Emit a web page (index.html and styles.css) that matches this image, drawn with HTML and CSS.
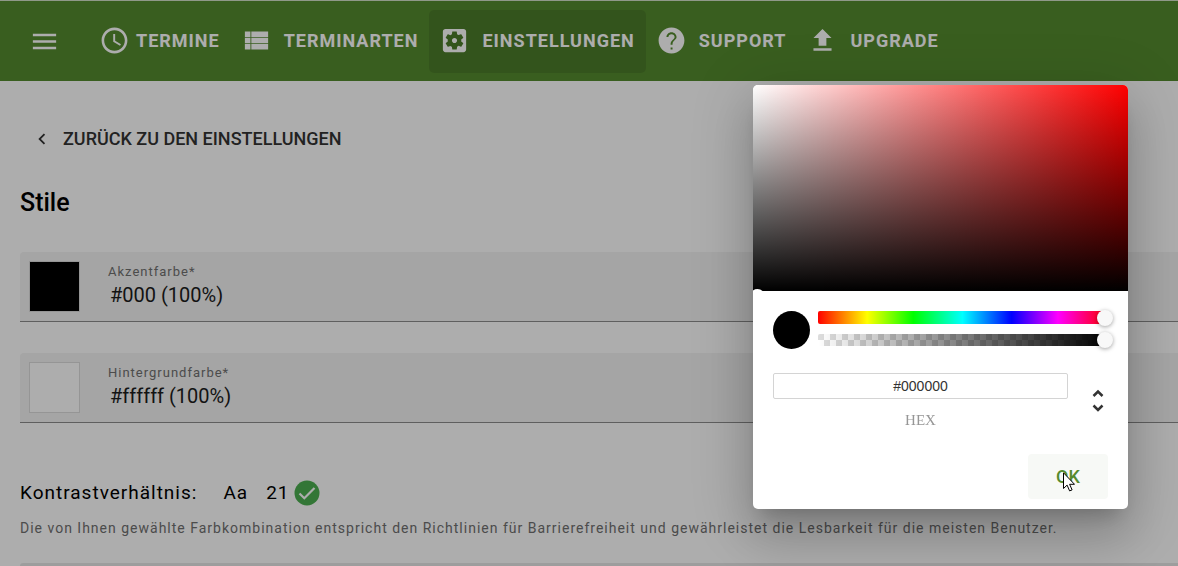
FILE: index.html
```html
<!DOCTYPE html>
<html lang="de">
<head>
    <meta charset="UTF-8">
    <meta name="viewport" content="width=device-width, initial-scale=1.0">
    <title>Einstellungen - Stile</title>
    <link rel="stylesheet" href="styles.css">
</head>
<body>

    <header class="topbar">
        <button class="menu-button" type="button" aria-label="Menü">
            <svg class="icon" viewBox="0 0 24 24"><path d="M3 18h18v-2H3v2zm0-5h18v-2H3v2zm0-7v2h18V6H3z"/></svg>
        </button>
        <nav class="nav">
            <a class="nav-item nav-item-first" href="#">
                <svg class="icon" viewBox="0 0 24 24"><path d="M11.99 2C6.47 2 2 6.48 2 12s4.47 10 9.99 10C17.52 22 22 17.52 22 12S17.52 2 11.99 2zM12 20c-4.42 0-8-3.58-8-8s3.58-8 8-8 8 3.58 8 8-3.58 8-8 8zm.5-13H11v6l5.25 3.15.75-1.23-4.5-2.67z"/></svg>
                Termine
            </a>
            <a class="nav-item" href="#">
                <svg class="icon" viewBox="0 0 24 24"><path d="M3 9.300h4.300V5H3v4.300zm0 4.800h4.300V9.900H3v4.200zm0 4.900h4.300v-4.300H3V19zM8 19h13v-4.300H8V19zm0-4.900h13V9.900H8v4.200zM8 5v4.300h13V5H8z"/></svg>
                Terminarten
            </a>
            <a class="nav-item active" href="#">
                <svg class="icon" viewBox="0 0 24 24"><path d="M12 10c-1.100 0-2 .9-2 2s.9 2 2 2 2-.9 2-2-.9-2-2-2zm7-7H5c-1.110 0-2 .9-2 2v14c0 1.100.89 2 2 2h14c1.110 0 2-.9 2-2V5c0-1.100-.89-2-2-2zm-1.750 9c0 .23-.02.46-.05.68l1.480 1.160c.13.11.17.3.08.45l-1.400 2.420c-.09.15-.27.21-.43.15l-1.740-.7c-.36.28-.76.51-1.180.69l-.26 1.850c-.03.17-.18.3-.35.3h-2.800c-.17 0-.32-.13-.35-.29l-.26-1.850c-.43-.18-.82-.41-1.180-.69l-1.740.7c-.16.06-.34 0-.43-.15l-1.400-2.420c-.09-.15-.05-.34.08-.45l1.480-1.160c-.03-.23-.05-.46-.05-.69s.02-.46.05-.68l-1.480-1.160c-.13-.11-.17-.3-.08-.45l1.400-2.420c.09-.15.27-.21.43-.15l1.740.7c.36-.28.76-.51 1.180-.69l.26-1.850c.03-.17.18-.3.35-.3h2.800c.17 0 .32.13.35.29l.26 1.850c.43.18.82.41 1.180.69l1.740-.7c.16-.06.34 0 .43.15l1.400 2.420c.09.15.05.34-.08.45l-1.480 1.160c.03.23.05.46.05.69z"/></svg>
                Einstellungen
            </a>
            <a class="nav-item" href="#">
                <svg class="icon" viewBox="0 0 24 24"><path d="M12 2C6.480 2 2 6.480 2 12s4.480 10 10 10 10-4.480 10-10S17.520 2 12 2zm.8 17h-1.500v-1.600h1.500V19zm2.100-7.700l-.9.900c-.8.800-1.200 1.500-1.200 3h-1.500v-.4c0-1.100.5-2.100 1.200-2.800l1.300-1.300c.4-.4.600-.9.600-1.400 0-1.200-1-2.100-2.400-2.100s-2.400.9-2.400 2.100H8.100C8.100 7.300 9.800 5.600 12 5.600s3.900 1.700 3.900 3.700c0 .8-.4 1.500-1 2z"/></svg>
                Support
            </a>
            <a class="nav-item" href="#">
                <svg class="icon" viewBox="0 0 24 24"><path d="M9 16h6v-6h4l-7-7-7 7h4v6zm-4 2h14v2H5v-2z"/></svg>
                Upgrade
            </a>
        </nav>
    </header>

    <main class="content">
        <a class="back-link" href="#">
            <svg viewBox="0 0 24 24"><path d="M15.410 7.410L14 6l-6 6 6 6 1.410-1.410L10.830 12z"/></svg>
            ZURÜCK ZU DEN EINSTELLUNGEN
        </a>

        <h1>Stile</h1>

        <div class="color-field">
            <button class="swatch swatch-black" type="button" aria-label="Akzentfarbe wählen"></button>
            <div class="field-text">
                <label for="accentColor">Akzentfarbe*</label>
                <input id="accentColor" type="text" value="#000 (100%)">
            </div>
        </div>

        <div class="color-field">
            <button class="swatch swatch-white" type="button" aria-label="Hintergrundfarbe wählen"></button>
            <div class="field-text">
                <label for="backgroundColor">Hintergrundfarbe*</label>
                <input id="backgroundColor" type="text" value="#ffffff (100%)">
            </div>
        </div>

        <div class="contrast">
            <span>Kontrastverhältnis:</span>
            <span class="sample">Aa</span>
            <span class="ratio">21</span>
            <svg class="check" viewBox="0 0 26 26"><circle cx="13" cy="13" r="12.500" fill="#4caf50"/><path d="M5.500 13.500l4.800 4.700L20.500 8" fill="none" stroke="#fff" stroke-width="2.200"/></svg>
        </div>
        <p class="note">Die von Ihnen gewählte Farbkombination entspricht den Richtlinien für Barrierefreiheit und gewährleistet die Lesbarkeit für die meisten Benutzer.</p>

        <div class="next-section"></div>
    </main>

    <div class="backdrop"></div>

    <div class="color-picker" role="dialog" aria-label="Farbauswahl">
        <div class="saturation">
            <span class="saturation-cursor"></span>
        </div>
        <div class="picker-body">
            <div class="slider-row">
                <span class="preview"></span>
                <div class="sliders">
                    <input class="slider hue" type="range" min="0" max="360" value="360" aria-label="Farbton">
                    <input class="slider alpha" type="range" min="0" max="100" value="100" aria-label="Deckkraft">
                </div>
            </div>
            <div class="hex-row">
                <div class="hex-field">
                    <input id="hexValue" type="text" value="#000000">
                    <label for="hexValue">HEX</label>
                </div>
                <button class="format-button" type="button" aria-label="Format wechseln">
                    <svg viewBox="0 0 12 24"><path d="M1.500 7L6 2.500 10.500 7M1.500 16.500L6 21 10.500 16.500"/></svg>
                </button>
            </div>
            <div class="actions">
                <button class="ok-button" type="button">OK</button>
                <svg class="pointer" viewBox="0 0 12 20"><path d="M.5.800v15.700l3.600-3.400 2.500 5.800 2.500-1-2.500-5.600h4.900z" fill="#fff" stroke="#000"/></svg>
            </div>
        </div>
    </div>

</body>
</html>
```

FILE: styles.css
```css
* {
    box-sizing: border-box;
}
body {
    font-family: Roboto, Arial, sans-serif;
    margin: 0;
    background-color: #fff;
    color: #000;
}
button {
    padding: 0;
    border: none;
    background: none;
    font-family: inherit;
    cursor: pointer;
}

/* top bar */
.topbar {
    display: flex;
    align-items: center;
    gap: 29px;
    padding: 9px 29px 8px;
    border-top: 1px solid #d5e2cb;
    background-color: #558b2f;
    color: white;
}
.icon {
    display: block;
    flex: none;
    width: 31px;
    height: 31px;
    fill: currentColor;
}
.menu-button {
    color: white;
}
.nav {
    display: flex;
}
.nav-item {
    display: flex;
    align-items: center;
    gap: 12px;
    height: 63px;
    padding: 0 11px 2px 10px;
    border-radius: 5px;
    color: white;
    font-size: 18px;
    font-weight: 700;
    letter-spacing: 1px;
    text-decoration: none;
    text-transform: uppercase;
}
.nav-item-first {
    gap: 6px;
}
.nav-item.active {
    background-color: rgba(0, 0, 0, 0.1);
}

/* page */
.content {
    padding: 44px 0 0 20px;
}
.back-link {
    display: flex;
    align-items: center;
    gap: 10px;
    padding-left: 11px;
    color: #333;
    font-size: 18px;
    font-weight: 500;
    line-height: 28px;
    text-decoration: none;
}
.back-link svg {
    width: 22px;
    height: 22px;
    fill: currentColor;
}
h1 {
    margin: 33px 0;
    font-size: 25px;
    font-weight: 500;
    line-height: 33px;
}
.color-field {
    display: flex;
    align-items: center;
    gap: 28px;
    height: 70px;
    margin-bottom: 31px;
    padding-left: 9px;
    border-bottom: 1px solid #8c8c8c;
    border-radius: 4px 0 0 0;
    background-color: #f3f3f3;
}
.swatch {
    width: 51px;
    height: 51px;
    border: 1px solid #dcdcdc;
}
.swatch-black {
    background-color: #000;
}
.swatch-white {
    background-color: #fff;
}
.field-text {
    display: flex;
    flex: 1;
    flex-direction: column;
    padding-bottom: 4px;
}
.field-text label {
    color: #707070;
    font-size: 13px;
    letter-spacing: 1px;
    line-height: 20px;
}
.field-text input {
    width: 100%;
    padding: 0 2px;
    border: none;
    outline: none;
    background: none;
    color: #1c1c1c;
    font-family: inherit;
    font-size: 20px;
    line-height: 26px;
}
.contrast {
    display: flex;
    align-items: center;
    padding-top: 26px;
    font-size: 19px;
    letter-spacing: 1px;
    line-height: 26px;
}
.sample {
    margin-left: 26px;
}
.ratio {
    margin-left: 18px;
}
.check {
    width: 26px;
    height: 26px;
    margin-left: 4px;
}
.note {
    margin: 11px 0 24px;
    color: #707070;
    font-size: 14px;
    letter-spacing: 1px;
    line-height: 22px;
}
.next-section {
    height: 3px;
    border-radius: 4px 0 0 0;
    background-color: #e8e8e8;
}
.backdrop {
    position: fixed;
    inset: 0;
    background-color: rgba(0, 0, 0, 0.32);
}

/* colour picker */
.color-picker {
    position: absolute;
    top: 85px;
    right: 50px;
    width: 375px;
    border-radius: 5px;
    background-color: white;
    box-shadow: 0 14px 19px -9px rgba(0, 0, 0, 0.2), 0 30px 48px 4px rgba(0, 0, 0, 0.14), 0 11px 58px 10px rgba(0, 0, 0, 0.12);
}
.saturation {
    position: relative;
    height: 206px;
    overflow: hidden;
    border-radius: 5px 5px 0 0;
    background: linear-gradient(to top, #000, transparent), linear-gradient(to right, #fff, #f00);
}
.saturation-cursor {
    position: absolute;
    bottom: -13px;
    left: -3px;
    width: 15px;
    height: 15px;
    border: 2px solid white;
    border-radius: 50%;
}
.picker-body {
    padding: 20px 20px 10px;
}
.slider-row {
    display: flex;
    gap: 8px;
    margin-right: -5px;
}
.preview {
    flex: none;
    width: 37px;
    height: 38px;
    border-radius: 50%;
    background-color: #000;
}
.sliders {
    display: flex;
    flex: 1;
    flex-direction: column;
    gap: 10px;
}
.slider {
    width: 100%;
    height: 13px;
    margin: 0;
    border-radius: 2px 0 0 2px;
    appearance: none;
}
.hue {
    background: linear-gradient(to right, #f00, #ff0 17%, #0f0 33%, #0ff 50%, #00f 67%, #f0f 83%, #f00) no-repeat 0 0 / calc(100% - 6px) 100%;
}
.alpha {
    height: 12px;
    background:
        linear-gradient(#fff, #fff) no-repeat right / 6px 100%,
        linear-gradient(to right, transparent, #000 98%),
        repeating-conic-gradient(#ddd 0 25%, #fff 0 50%) 6px 0 / 12px 12px;
}
.slider::-webkit-slider-thumb {
    width: 16px;
    height: 16px;
    border-radius: 50%;
    background-color: #f8f8f8;
    box-shadow: 0 1px 4px rgba(0, 0, 0, 0.37);
    appearance: none;
}
.hex-row {
    display: flex;
    align-items: center;
    gap: 20px;
    padding-top: 24px;
}
.hex-field {
    display: flex;
    flex: 1;
    flex-direction: column;
    text-align: center;
}
.hex-field input {
    width: 100%;
    height: 26px;
    border: 1px solid #d4d4d4;
    border-radius: 2px;
    color: #333;
    font-family: "Liberation Sans", Arial, sans-serif;
    font-size: 14px;
    text-align: center;
}
.hex-field label {
    margin-top: 12px;
    color: #969696;
    font-family: "Liberation Serif", serif;
    font-size: 15px;
    line-height: 18px;
}
.format-button {
    width: 20px;
    height: 24px;
}
.format-button svg {
    display: block;
    width: 12px;
    height: 24px;
    margin: 0 auto;
    fill: none;
    stroke: #333;
    stroke-width: 2.500;
}
.actions {
    position: relative;
    display: flex;
    justify-content: flex-end;
    padding-top: 25px;
}
.ok-button {
    width: 80px;
    height: 45px;
    border-radius: 4px;
    background-color: #f7f9f6;
    color: #558b2f;
    font-size: 18px;
    font-weight: 500;
}
.pointer {
    position: absolute;
    right: 33px;
    bottom: 7px;
    width: 12px;
    height: 20px;
}
```
